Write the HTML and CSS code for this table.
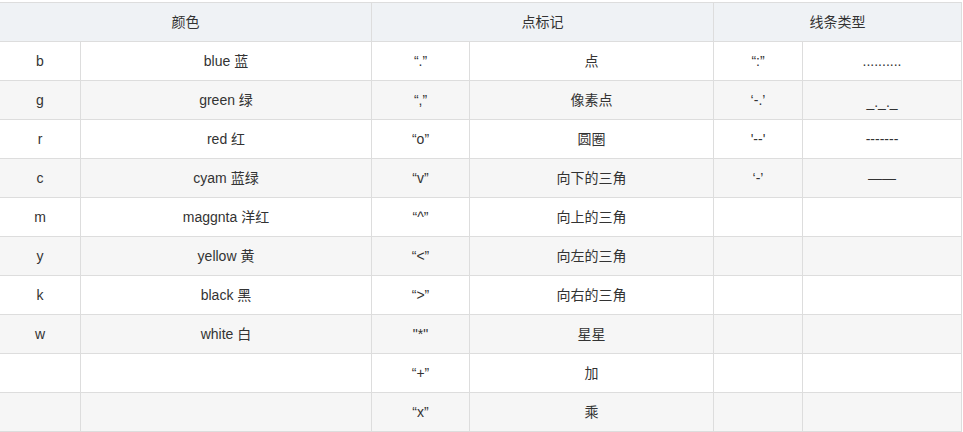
FILE: index.html
```html
<!DOCTYPE html>
<html lang="zh">
<head>
<meta charset="utf-8">
<title>matplotlib 样式</title>
<link rel="stylesheet" href="styles.css">
</head>
<body>
<table class="grid">
  <colgroup>
    <col class="c1"><col class="c2"><col class="c3"><col class="c4"><col class="c5"><col class="c6">
  </colgroup>
  <thead>
    <tr><th colspan="2">颜色</th><th colspan="2">点标记</th><th colspan="2">线条类型</th></tr>
  </thead>
  <tbody>
    <tr><td>b</td><td>blue 蓝</td><td>“.”</td><td>点</td><td>“:”</td><td>..........</td></tr>
    <tr><td>g</td><td>green 绿</td><td>“,”</td><td>像素点</td><td>‘-.’</td><td class="low">_._._</td></tr>
    <tr><td>r</td><td>red 红</td><td>“o”</td><td>圆圈</td><td>'--'</td><td>-------</td></tr>
    <tr><td>c</td><td>cyam 蓝绿</td><td>“v”</td><td>向下的三角</td><td>‘-’</td><td>——</td></tr>
    <tr><td>m</td><td>maggnta 洋红</td><td>“^”</td><td>向上的三角</td><td></td><td></td></tr>
    <tr><td>y</td><td>yellow 黄</td><td>“&lt;”</td><td>向左的三角</td><td></td><td></td></tr>
    <tr><td>k</td><td>black 黑</td><td>“&gt;”</td><td>向右的三角</td><td></td><td></td></tr>
    <tr><td>w</td><td>white 白</td><td>"*"</td><td>星星</td><td></td><td></td></tr>
    <tr><td></td><td></td><td>“+”</td><td>加</td><td></td><td></td></tr>
    <tr><td></td><td></td><td>“x”</td><td>乘</td><td></td><td></td></tr>
  </tbody>
</table>
</body>
</html>
```

FILE: styles.css
```css
html, body {
  margin: 0;
  padding: 0;
  background: #ffffff;
}

body {
  padding-top: 2px;
  font-family: "Liberation Sans", Arial, "Noto Sans CJK SC", sans-serif;
  font-size: 14px;
  color: #333333;
}

.grid {
  border-collapse: collapse;
  table-layout: fixed;
  width: 962px;
  margin-left: -1px;
}

.c1 { width: 81px; }
.c2 { width: 291px; }
.c3 { width: 98px; }
.c4 { width: 244px; }
.c5 { width: 89px; }
.c6 { width: 159px; }

.grid th,
.grid td {
  border: 1px solid #dddddd;
  height: 39px;
  padding: 0 8px;
  line-height: 18px;
  text-align: center;
  vertical-align: middle;
  box-sizing: border-box;
}

.grid th {
  font-weight: normal;
  background: #eff2f5;
}

.grid tbody tr:nth-child(even) td {
  background: #f6f6f6;
}

.grid td.low {
  padding-top: 4px;
}
```
